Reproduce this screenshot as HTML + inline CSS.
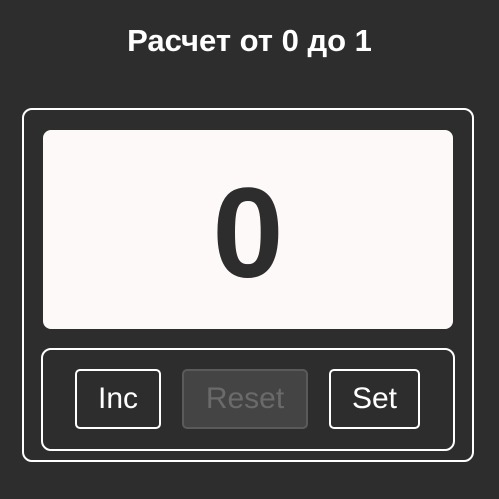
<!DOCTYPE html>
<html><head><meta charset="utf-8"><style>
body{margin:0;width:499px;height:499px;background:#2d2d2d;font-family:"Liberation Sans",Arial,sans-serif;position:relative;overflow:hidden}
.t{position:absolute;left:0;width:499px;top:23px;text-align:center;color:#fff;font-weight:bold;font-size:31px;line-height:36px}
.o{position:absolute;left:22px;top:108px;width:448px;height:350px;border:2px solid #fff;border-radius:10px}
.d{position:absolute;left:43px;top:130px;width:410px;height:199px;background:#fdf9f8;border-radius:8px;text-align:center;color:#2d2d2d;font-weight:bold;font-size:128px;line-height:207px}
.b{position:absolute;left:41px;top:348px;width:410px;height:99px;border:2px solid #fff;border-radius:10px}
.btn{position:absolute;top:369px;height:56px;border:2px solid #fff;border-radius:5px;color:#fff;font-size:30px;line-height:56px;text-align:center;box-sizing:content-box}
</style></head><body>
<div class="t">Расчет от 0 до 1</div>
<div class="o"></div>
<div class="d">0</div>
<div class="b"></div>
<div class="btn" style="left:75px;width:82px">Inc</div>
<div class="btn" style="left:182px;width:122px;border-color:#5a5a5a;background:#444;color:#6a6a6a">Reset</div>
<div class="btn" style="left:329px;width:87px">Set</div>
</body></html>
